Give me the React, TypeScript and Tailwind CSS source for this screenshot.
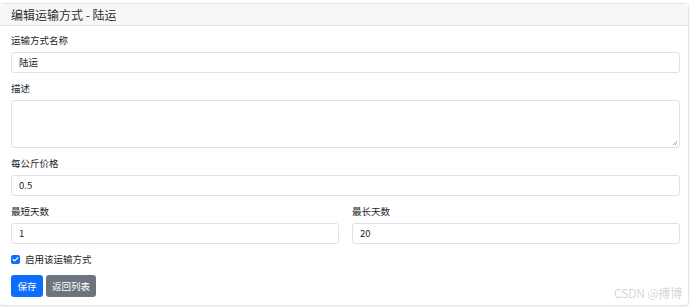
import { Check } from 'lucide-react';

const font = { fontFamily: '"Noto Sans CJK SC", "Noto Sans", sans-serif' };

function Field({ label, value, className = '' }: { label: string; value: string; className?: string }) {
  return (
    <div className={className}>
      <div className="h-[13px] leading-[13px] text-[9.5px] text-[#212529] mb-[5px]">{label}</div>
      <div className="h-[21px] border border-[#dee2e6] rounded-[3px] bg-white px-[7px] flex items-center text-[9.5px] text-[#212529]">
        {value}
      </div>
    </div>
  );
}

export default function App() {
  return (
    <div className="w-[692px] h-[307px] bg-white relative overflow-hidden" style={font}>
      <div className="mt-[3px] ml-[-1px] w-[690px] border border-[#e3e5e8] rounded-[4px] shadow-[0_1px_3px_rgba(0,0,0,0.08)] bg-white">
        <div className="h-[22px] bg-[#f7f7f7] border-b border-[#dfe1e4] pl-[11px] flex items-center text-[12px] text-[#2b2f33]">
          编辑运输方式 - 陆运
        </div>
        <div className="pl-[11px] pr-[8px] pt-[8px] pb-[8px] flex flex-col gap-[9px]">
          <Field label="运输方式名称" value="陆运" />
          <div>
            <div className="h-[13px] leading-[13px] text-[9.5px] text-[#212529] mb-[5px]">描述</div>
            <div className="h-[48px] border border-[#dee2e6] rounded-[3px] bg-white relative">
              <svg className="absolute right-[1px] bottom-[1px]" width="6" height="6" viewBox="0 0 6 6">
                <path d="M5 1 L1 5 M5 3 L3 5" stroke="#999" strokeWidth="0.8" />
              </svg>
            </div>
          </div>
          <Field label="每公斤价格" value="0.5" />
          <div className="flex gap-[13px]">
            <Field label="最短天数" value="1" className="flex-1" />
            <Field label="最长天数" value="20" className="flex-1" />
          </div>
          <div className="h-[13px] flex items-center gap-[5px] text-[9.5px] text-[#212529]">
            <span className="w-[9px] h-[9px] rounded-[2px] bg-[#0d6efd] flex items-center justify-center">
              <Check className="w-[7px] h-[7px] text-white" strokeWidth={4} />
            </span>
            启用该运输方式
          </div>
          <div className="flex gap-[3px]">
            <div className="h-[22px] w-[32px] rounded-[3px] bg-[#0d6efd] text-white text-[9.5px] flex items-center justify-center">保存</div>
            <div className="h-[22px] w-[50px] rounded-[3px] bg-[#6c757d] text-white text-[9.5px] flex items-center justify-center">返回列表</div>
          </div>
        </div>
      </div>
      <div className="absolute left-[614px] top-[285px] text-[12px] font-light text-[#c8c8c8] leading-[16px]">CSDN @搏博</div>
    </div>
  );
}
